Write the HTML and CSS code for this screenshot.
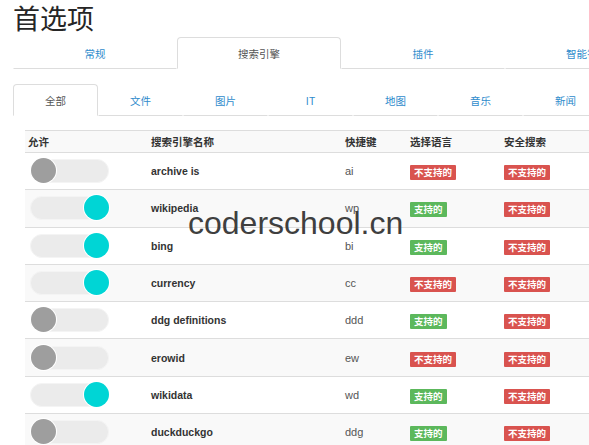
FILE: index.html
```html
<!DOCTYPE html>
<html lang="zh">
<head>
<meta charset="utf-8">
<title>首选项</title>
<link rel="stylesheet" href="styles.css">
</head>
<body>
<div class="page">
  <h1 class="title">首选项</h1>
  <ul class="tabs tabs-main">
    <li class="tab"><a>常规</a></li>
    <li class="tab active"><a>搜索引擎</a></li>
    <li class="tab"><a>插件</a></li>
    <li class="tab"><a>智能答案</a></li>
  </ul>
  <ul class="tabs tabs-sub">
    <li class="tab active"><a>全部</a></li>
    <li class="tab"><a>文件</a></li>
    <li class="tab"><a>图片</a></li>
    <li class="tab"><a>IT</a></li>
    <li class="tab"><a>地图</a></li>
    <li class="tab"><a>音乐</a></li>
    <li class="tab"><a>新闻</a></li>
  </ul>
  <table class="engines">
    <colgroup>
      <col class="c1"><col class="c2"><col class="c3"><col class="c4"><col class="c5">
    </colgroup>
    <tbody>
      <tr class="head">
        <th>允许</th><th>搜索引擎名称</th><th>快捷键</th><th>选择语言</th><th>安全搜索</th>
      </tr>
      <tr>
        <td><span class="toggle"><span class="knob"></span></span></td>
        <td class="name">archive is</td><td class="key">ai</td>
        <td><span class="label no">不支持的</span></td><td><span class="label no">不支持的</span></td>
      </tr>
      <tr>
        <td><span class="toggle on"><span class="knob"></span></span></td>
        <td class="name">wikipedia</td><td class="key">wp</td>
        <td><span class="label yes">支持的</span></td><td><span class="label no">不支持的</span></td>
      </tr>
      <tr>
        <td><span class="toggle on"><span class="knob"></span></span></td>
        <td class="name">bing</td><td class="key">bi</td>
        <td><span class="label yes">支持的</span></td><td><span class="label no">不支持的</span></td>
      </tr>
      <tr>
        <td><span class="toggle on"><span class="knob"></span></span></td>
        <td class="name">currency</td><td class="key">cc</td>
        <td><span class="label no">不支持的</span></td><td><span class="label no">不支持的</span></td>
      </tr>
      <tr>
        <td><span class="toggle"><span class="knob"></span></span></td>
        <td class="name">ddg definitions</td><td class="key">ddd</td>
        <td><span class="label yes">支持的</span></td><td><span class="label no">不支持的</span></td>
      </tr>
      <tr>
        <td><span class="toggle"><span class="knob"></span></span></td>
        <td class="name">erowid</td><td class="key">ew</td>
        <td><span class="label no">不支持的</span></td><td><span class="label no">不支持的</span></td>
      </tr>
      <tr>
        <td><span class="toggle on"><span class="knob"></span></span></td>
        <td class="name">wikidata</td><td class="key">wd</td>
        <td><span class="label yes">支持的</span></td><td><span class="label no">不支持的</span></td>
      </tr>
      <tr>
        <td><span class="toggle"><span class="knob"></span></span></td>
        <td class="name">duckduckgo</td><td class="key">ddg</td>
        <td><span class="label yes">支持的</span></td><td><span class="label no">不支持的</span></td>
      </tr>
    </tbody>
  </table>
</div>
<div class="watermark">coderschool.cn</div>
</body>
</html>
```

FILE: styles.css
```css
html, body {
  margin: 0;
  padding: 0;
  overflow: hidden;
  background: #fff;
}
body {
  font-family: "Liberation Sans", "Noto Sans CJK SC", sans-serif;
  color: #333;
  position: relative;
  width: 589px;
  height: 445px;
}
.page {
  padding-left: 13px;
  width: 800px;
}
.title {
  margin: 0 0 3px 0;
  padding-top: 1px;
  font-size: 27px;
  line-height: 33px;
  font-weight: normal;
  color: #262626;
  font-family: "Noto Sans CJK SC", "Liberation Sans", sans-serif;
}
.tabs {
  list-style: none;
  margin: 0;
  padding: 0;
  display: flex;
}
.tab a {
  display: flex;
  align-items: center;
  justify-content: center;
  height: 30px;
  font-size: 10.5px;
  color: #2f8bcc;
  border: 1px solid transparent;
  border-bottom-color: #ddd;
  border-radius: 4px 4px 0 0;
  font-family: "Noto Sans CJK SC", "Liberation Sans", sans-serif;
}
.tab.active a {
  color: #555;
  border-color: #ddd;
  border-bottom-color: transparent;
}
.tabs-main .tab {
  flex: 0 0 164px;
}
.tabs-sub {
  margin-top: 15px;
}
.tabs-sub .tab {
  flex: 0 0 85px;
}
.engines {
  margin: 14px 0 0 12px;
  border-collapse: collapse;
  table-layout: fixed;
  width: 600px;
}
.c1 { width: 122px; }
.c2 { width: 194px; }
.c3 { width: 65px; }
.c4 { width: 94px; }
.c5 { width: 125px; }
.engines th,
.engines td {
  text-align: left;
  padding: 0 4px;
  vertical-align: middle;
  border-top: 1px solid #ddd;
}
.engines th:first-child,
.engines td:first-child {
  padding-left: 3px;
}
.engines th {
  height: 21px;
  font-size: 10.5px;
  font-weight: bold;
  color: #333;
  font-family: "Noto Sans CJK SC", "Liberation Sans", sans-serif;
}
.engines td {
  height: 36.3px;
}
.engines tr:nth-child(odd) {
  background: #f9f9f9;
}
.name {
  font-size: 10.5px;
  font-weight: bold;
  color: #333;
}
.key {
  font-size: 11px;
  color: #555;
}
.toggle {
  display: block;
  position: relative;
  width: 77px;
  height: 22px;
  margin-left: 2px;
  border-radius: 12px;
  background: #ebebeb;
  border: 1px solid #f4f4f4;
}
.knob {
  position: absolute;
  left: 0;
  top: -2px;
  width: 25px;
  height: 25px;
  border-radius: 50%;
  background: #9e9e9e;
  box-shadow: 0 0 0 1px #fff;
}
.toggle.on .knob {
  left: auto;
  right: -1px;
  background: #00d5d5;
}
.label {
  display: inline-block;
  font-size: 9.5px;
  font-weight: bold;
  color: #fff;
  line-height: 15px;
  padding: 0 4px;
  border-radius: 1px;
  font-family: "Noto Sans CJK SC", "Liberation Sans", sans-serif;
}
.label.no {
  background: #d9534f;
}
.label.yes {
  background: #5cb85c;
}
.watermark {
  position: absolute;
  left: 188px;
  top: 207px;
  font-family: "Liberation Sans", sans-serif;
  font-size: 32px;
  line-height: 32px;
  color: #3f3f3f;
  pointer-events: none;
}
```
